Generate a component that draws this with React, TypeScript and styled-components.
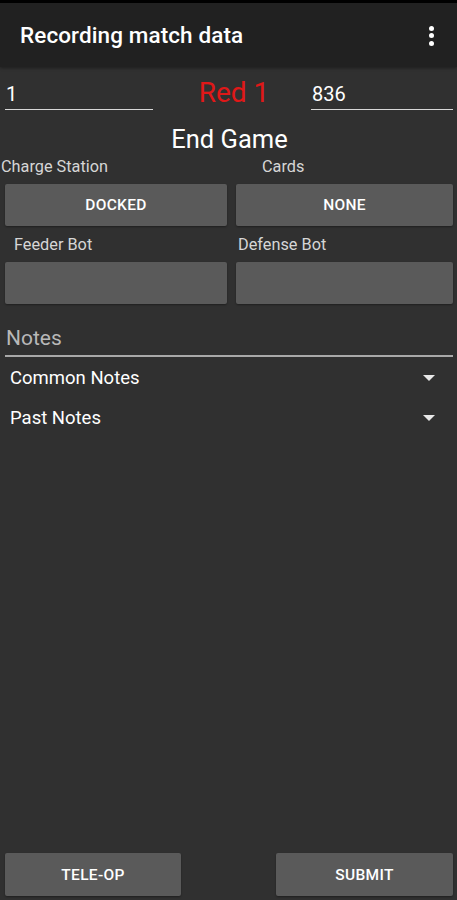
import React from "react";
import styled, { createGlobalStyle } from "styled-components";

const Global = createGlobalStyle`
  html, body { margin: 0; padding: 0; background: #303030; }
  body { font-family: Roboto, "Liberation Sans", sans-serif; color: #fff; }
  * { box-sizing: border-box; }
`;

const Page = styled.div`
  width: 457px;
  height: 900px;
  display: flex;
  flex-direction: column;
  background: #303030;
  overflow: hidden;
`;

const StatusStrip = styled.div`
  height: 3px;
  background: #000;
`;

const AppBar = styled.header`
  height: 64px;
  background: #212121;
  display: flex;
  align-items: center;
  justify-content: space-between;
  padding: 0 23px 0 20px;
  box-shadow: 0 1px 3px rgba(0, 0, 0, 0.4);
`;

const Title = styled.h1`
  margin: 0;
  font-size: 22.5px;
  font-weight: 500;
  letter-spacing: 0.1px;
`;

const Kebab = styled.div`
  display: flex;
  flex-direction: column;
  gap: 2.5px;
  padding-top: 1px;
`;

const Dot = styled.span`
  width: 5px;
  height: 5px;
  border-radius: 50%;
  background: #fff;
`;

const TopRow = styled.div`
  display: grid;
  grid-template-columns: 148px 1fr 142px;
  align-items: end;
  padding: 3px 4px 0 5px;
`;

const Field = styled.div`
  border-bottom: 1.5px solid #d8d8d8;
  height: 40px;
  display: flex;
  align-items: flex-end;
  font-size: 20px;
  line-height: 22px;
  padding: 0 1px 4px;
`;

const Alliance = styled.div`
  text-align: center;
  color: #e01818;
  font-size: 28px;
  line-height: 32px;
  margin-bottom: 1px;
  padding-left: 4px;
`;

const SectionTitle = styled.div`
  text-align: center;
  font-size: 25.5px;
  margin-top: 14px;
  padding-left: 2px;
  line-height: 30px;
`;

const Grid = styled.div`
  display: grid;
  grid-template-columns: 222px 217px;
  column-gap: 9px;
  padding: 0 4px 0 5px;
`;

const Label = styled.div<{ $shift?: number; $top: number }>`
  font-size: 16.3px;
  color: #d6d6d6;
  height: 20px;
  line-height: 20px;
  margin-left: ${(p) => p.$shift ?? 0}px;
  margin-top: ${(p) => p.$top}px;
  margin-bottom: 7px;
  white-space: nowrap;
`;

const Button = styled.button`
  height: 42px;
  border: none;
  border-radius: 2px;
  background: #5a5a5a;
  color: #fff;
  font-family: Roboto, "Liberation Sans", sans-serif;
  font-weight: 500;
  font-size: 15.5px;
  letter-spacing: 0.3px;
  box-shadow: 0 1px 2px rgba(0, 0, 0, 0.35);
  padding: 0;
`;

const NotesField = styled.div`
  margin: 21px 4px 0 5px;
  border-bottom: 2px solid #a8a8a8;
  font-size: 21px;
  color: #b8b8b8;
  padding: 0 0 4px 1px;
  line-height: 26px;
`;

const DropList = styled.div`
  display: flex;
  flex-direction: column;
  padding-top: 1px;
`;

const DropRow = styled.div`
  display: flex;
  align-items: center;
  justify-content: space-between;
  height: 40px;
  padding: 0 22px 0 10px;
  font-size: 18.5px;
`;

const Caret = styled.span`
  width: 0;
  height: 0;
  border-left: 6px solid transparent;
  border-right: 6px solid transparent;
  border-top: 6px solid #e8e8e8;
`;

const Spacer = styled.div`
  flex: 1;
`;

const BottomBar = styled.div`
  display: flex;
  justify-content: space-between;
  padding: 0 4px 4px 5px;
`;

const BottomButton = styled(Button)<{ $w: number }>`
  width: ${(p) => p.$w}px;
  height: 43px;
`;

export default function App() {
  return (
    <Page>
      <Global />
      <StatusStrip />
      <AppBar>
        <Title>Recording match data</Title>
        <Kebab>
          <Dot />
          <Dot />
          <Dot />
        </Kebab>
      </AppBar>
      <TopRow>
        <Field>1</Field>
        <Alliance>Red 1</Alliance>
        <Field>836</Field>
      </TopRow>
      <SectionTitle>End Game</SectionTitle>
      <Grid>
        <Label $shift={-4} $top={3}>Charge Station</Label>
        <Label $shift={26} $top={3}>Cards</Label>
        <Button>DOCKED</Button>
        <Button>NONE</Button>
        <Label $shift={9} $top={9}>Feeder Bot</Label>
        <Label $shift={2} $top={9}>Defense Bot</Label>
        <Button />
        <Button />
      </Grid>
      <NotesField>Notes</NotesField>
      <DropList>
        <DropRow>
          Common Notes
          <Caret />
        </DropRow>
        <DropRow>
          Past Notes
          <Caret />
        </DropRow>
      </DropList>
      <Spacer />
      <BottomBar>
        <BottomButton $w={176}>TELE-OP</BottomButton>
        <BottomButton $w={177}>SUBMIT</BottomButton>
      </BottomBar>
    </Page>
  );
}
